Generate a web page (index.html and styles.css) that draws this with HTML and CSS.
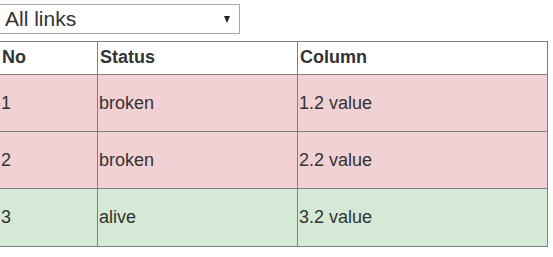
FILE: index.html
```html
<!DOCTYPE html>
<html>
<head>
<meta charset="utf-8">
<link rel="stylesheet" href="styles.css">
</head>
<body>
<div class="page">
  <div class="picker">
    <select class="picker-select">
      <option>All links</option>
      <option>Broken links</option>
      <option>Alive links</option>
    </select>
    <span class="picker-arrow"></span>
  </div>
  <table class="links">
    <colgroup>
      <col class="c-no">
      <col class="c-status">
      <col class="c-col">
    </colgroup>
    <thead>
      <tr><th>No</th><th>Status</th><th>Column</th></tr>
    </thead>
    <tbody>
      <tr class="broken"><td>1</td><td>broken</td><td>1.2 value</td></tr>
      <tr class="broken"><td>2</td><td>broken</td><td>2.2 value</td></tr>
      <tr class="alive"><td>3</td><td>alive</td><td>3.2 value</td></tr>
    </tbody>
  </table>
</div>
</body>
</html>
```
FILE: styles.css
```css
html, body {
  margin: 0;
  padding: 0;
  background: #fff;
}
body {
  font-family: "Liberation Sans", Arial, sans-serif;
  color: #333;
}
.page {
  margin-left: -1px;
  padding-top: 4px;
}
.picker {
  position: relative;
  width: 241px;
  height: 30px;
}
.picker-select {
  -webkit-appearance: none;
  appearance: none;
  box-sizing: border-box;
  width: 241px;
  height: 30px;
  margin: 0;
  border: 1px solid #a9a9a9;
  border-radius: 0;
  background: #fff;
  color: #333;
  font-family: "Liberation Sans", Arial, sans-serif;
  font-size: 21px;
  line-height: 28px;
  padding: 0 20px 0 5px;
}
.picker-arrow {
  position: absolute;
  right: 10px;
  top: 12px;
  width: 0;
  height: 0;
  border-left: 3.5px solid transparent;
  border-right: 3.5px solid transparent;
  border-top: 7px solid #222;
  pointer-events: none;
}
.links {
  margin-top: 7px;
  border-collapse: collapse;
  table-layout: fixed;
  width: 548px;
  font-size: 18px;
}
.c-no { width: 98px; }
.c-status { width: 200px; }
.c-col { width: 250px; }
.links th, .links td {
  border: 1px solid #808080;
  text-align: left;
  vertical-align: middle;
}
.links th {
  font-weight: bold;
  height: 30px;
  padding: 0 2px 2px 2px;
  background: #fff;
}
.links td {
  height: 56px;
  padding: 0 1px;
}
.links tbody tr:last-child td {
  height: 57px;
}
.broken td { background: #f2d1d4; }
.alive td { background: #d4e9d6; }
```
